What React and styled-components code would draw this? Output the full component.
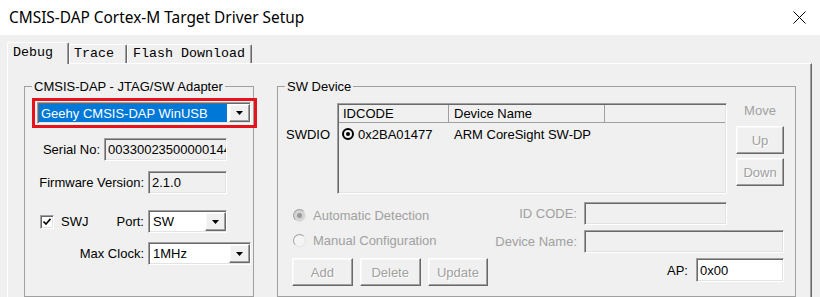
import React from 'react';
import styled, { createGlobalStyle, css } from 'styled-components';

const GlobalStyle = createGlobalStyle`
  * { box-sizing: border-box; }
  body {
    margin: 0;
    background: #f0f0f0;
    font-family: "Liberation Sans", Arial, sans-serif;
    font-size: 13px;
    color: #000;
  }
`;

const sunken = css`
  border: 1px solid;
  border-color: #a0a0a0 #fff #fff #a0a0a0;
  box-shadow: inset 1px 1px 0 #696969, inset -1px -1px 0 #e3e3e3;
`;

const raised = css`
  border: 1px solid;
  border-color: #fff #696969 #696969 #fff;
  box-shadow: inset -1px -1px 0 #a0a0a0, inset 1px 1px 0 #f8f8f8;
`;

const Window = styled.div`
  width: 820px;
  height: 297px;
  overflow: hidden;
  background: #f0f0f0;
`;

const TitleBar = styled.div`
  height: 35px;
  background: #fff;
  display: flex;
  align-items: center;
  justify-content: space-between;
  padding: 0 14px 0 9px;
`;

const Title = styled.div`
  font-family: "Noto Sans", "Open Sans", sans-serif;
  font-size: 15.4px;
  line-height: 20px;
  color: #000;
`;

const Body = styled.div`
  padding: 7px 8px 0 7px;
`;

const TabStrip = styled.div`
  display: flex;
  align-items: flex-end;
  height: 21px;
`;

const Tab = styled.div`
  position: relative;
  z-index: ${p => (p.$active ? 1 : 0)};
  width: ${p => p.$w}px;
  height: ${p => (p.$active ? 22 : 19)}px;
  margin-bottom: ${p => (p.$active ? -1 : 0)}px;
  padding-left: ${p => p.$pad}px;
  background: #f0f0f0;
  border: 1px solid;
  border-bottom: none;
  border-color: #fff #696969 transparent #fff;
  box-shadow: inset -1px 0 0 #a0a0a0;
  border-radius: 2px 2px 0 0;
  font-family: "Liberation Mono", "Courier New", monospace;
  font-size: 13.33px;
  line-height: ${p => (p.$active ? 20 : 17)}px;
  white-space: nowrap;
`;

const TabPanel = styled.div`
  height: 240px;
  border-top: 1px solid #fff;
  border-left: 1px solid #fff;
  border-right: 1px solid #696969;
  box-shadow: inset -1px 0 0 #a0a0a0;
  padding: 15px 0 0 16px;
  display: flex;
  gap: 23px;
`;

const Group = styled.fieldset`
  margin: 0;
  padding: 0;
  min-width: 0;
  width: ${p => p.$w}px;
  height: 218px;
  border: 1px solid #a0a0a0;
`;

const Legend = styled.legend`
  margin-left: 7px;
  padding: 0 2px;
  line-height: 15px;
  font-size: 13px;
`;

const Marked = styled.div`
  margin: 4px 0 0 7px;
  width: 225px;
  height: 30px;
  border: 3px solid #e5141c;
  padding: 1px 0 0 2px;
`;

const Row = styled.div`
  display: flex;
  align-items: center;
  height: 23px;
  margin-top: ${p => p.$mt}px;
`;

const Label = styled.div`
  width: ${p => p.$w}px;
  margin-right: 4px;
  text-align: right;
  white-space: nowrap;
`;

const LeftCell = styled.div`
  width: 119px;
  margin-right: 4px;
  display: flex;
  align-items: center;
`;

const Field = styled.div`
  ${sunken};
  width: ${p => (p.$w ? `${p.$w}px` : '100%')};
  height: ${p => p.$h || 23}px;
  background: ${p => (p.$white ? '#fff' : '#f0f0f0')};
  padding-left: 3px;
  display: flex;
  align-items: center;
  overflow: hidden;
  white-space: nowrap;
`;

const SelectBox = styled.div`
  ${sunken};
  width: ${p => p.$w}px;
  height: ${p => p.$h}px;
  background: #fff;
  padding: 1px 0 1px 1px;
  display: flex;
`;

const SelectValue = styled.div`
  flex: 1;
  min-width: 0;
  margin-right: 2px;
  padding-left: ${p => (p.$hl ? 2 : 3)}px;
  background: ${p => (p.$hl ? '#0078d7' : 'transparent')};
  color: ${p => (p.$hl ? '#fff' : '#000')};
  display: flex;
  align-items: center;
  white-space: nowrap;
  overflow: hidden;
`;

const DropButton = styled.div`
  ${raised};
  flex: 0 0 21px;
  background: #f0f0f0;
  display: flex;
  align-items: center;
  justify-content: center;
`;

const Check = styled.div`
  width: 14px;
  height: 14px;
  margin-left: 15px;
  ${sunken};
  background: #fff;
  display: flex;
  align-items: center;
  justify-content: center;
`;

const CheckText = styled.span`
  margin-left: 7px;
`;

const PortLabel = styled.span`
  margin-left: auto;
`;

const DeviceTop = styled.div`
  display: flex;
  align-items: flex-start;
  margin-top: 9px;
  padding-left: 8px;
  height: 91px;
`;

const SideLabel = styled.div`
  width: 51px;
  margin-top: 24px;
  line-height: 15px;
`;

const ChainTable = styled.div`
  ${sunken};
  width: 390px;
  height: 91px;
  padding: 1px;
  background: #f0f0f0;
`;

const TableRow = styled.div`
  display: grid;
  grid-template-columns: 110px 156px 1fr;
  height: ${p => (p.$head ? 18 : 22)}px;
  border-bottom: ${p => (p.$head ? '1px solid #a0a0a0' : 'none')};
`;

const Cell = styled.div`
  display: flex;
  align-items: center;
  padding-left: ${p => p.$pad ?? 4}px;
  border-right: ${p => (p.$head && !p.$last ? '1px solid #a0a0a0' : 'none')};
  white-space: nowrap;
`;

const RowMark = styled.span`
  width: 12px;
  height: 12px;
  margin-right: 4px;
  border: 2px solid #000;
  border-radius: 50%;
  display: flex;
  align-items: center;
  justify-content: center;
  &::after {
    content: '';
    width: 4px;
    height: 4px;
    border-radius: 50%;
    background: #000;
  }
`;

const MoveCol = styled.div`
  margin-left: 9px;
  width: 48px;
  display: flex;
  flex-direction: column;
`;

const MoveTitle = styled.div`
  line-height: 15px;
  text-align: center;
  color: #a0a0a0;
`;

const Button = styled.div`
  ${raised};
  width: ${p => p.$w}px;
  height: 28px;
  margin-top: ${p => p.$mt || 0}px;
  background: #f0f0f0;
  color: #a0a0a0;
  text-shadow: 1px 1px 0 #fff;
  display: flex;
  align-items: center;
  justify-content: center;
`;

const DetectGrid = styled.div`
  margin-top: 8px;
  padding: 0 11px 0 14px;
  display: grid;
  grid-template-columns: minmax(0, 1fr) auto 200px;
  grid-template-rows: 23px 23px 28px;
  column-gap: 7px;
  row-gap: 5px;
`;

const RadioItem = styled.div`
  display: flex;
  align-items: center;
  gap: 7px;
  padding-left: 1px;
  color: #a0a0a0;
  white-space: nowrap;
  transform: translateY(${p => p.$dy || 0}px);
`;

const Radio = styled.span`
  width: 13px;
  height: 13px;
  border-radius: 50%;
  border: 1px solid;
  border-color: #a0a0a0 #e3e3e3 #e3e3e3 #a0a0a0;
  background: ${p => (p.$on ? '#d4d4d4' : '#f4f4f4')};
  display: flex;
  align-items: center;
  justify-content: center;
  &::after {
    content: '';
    width: 5px;
    height: 5px;
    border-radius: 50%;
    background: ${p => (p.$on ? '#9a9a9a' : 'transparent')};
  }
`;

const DimLabel = styled.div`
  text-align: right;
  align-self: center;
  color: ${p => (p.$dim ? '#a0a0a0' : '#000')};
  white-space: nowrap;
`;

const ButtonBar = styled.div`
  display: flex;
  gap: 7px;
`;

const ApCell = styled.div`
  grid-column: 2 / 4;
  justify-self: end;
  align-self: start;
  display: flex;
  align-items: center;
  gap: 8px;
`;

const Arrow = () => (
  <svg width="7" height="4" viewBox="0 0 7 4">
    <polygon points="0,0 7,0 3.5,4" fill="#000" />
  </svg>
);

const Select = ({ w, h, value, hl }) => (
  <SelectBox $w={w} $h={h}>
    <SelectValue $hl={hl}>{value}</SelectValue>
    <DropButton>
      <Arrow />
    </DropButton>
  </SelectBox>
);

export default function App() {
  return (
    <Window>
      <GlobalStyle />
      <TitleBar>
        <Title>CMSIS-DAP Cortex-M Target Driver Setup</Title>
        <svg width="13" height="13" viewBox="0 0 13 13">
          <path d="M0.5 0.5 L12.5 12.5 M12.5 0.5 L0.5 12.5" stroke="#000" strokeWidth="1" />
        </svg>
      </TitleBar>
      <Body>
        <TabStrip>
          <Tab $active $w={62} $pad={5}>Debug</Tab>
          <Tab $w={58} $pad={4}>Trace</Tab>
          <Tab $w={125} $pad={5}>Flash Download</Tab>
        </TabStrip>
        <TabPanel>
          <Group $w={230}>
            <Legend>CMSIS-DAP - JTAG/SW Adapter</Legend>
            <Marked>
              <Select w={214} h={22} value="Geehy CMSIS-DAP WinUSB" hl />
            </Marked>
            <Row $mt={10}>
              <Label $w={75}>Serial No:</Label>
              <Field $w={123}>00330023500000144</Field>
            </Row>
            <Row $mt={10}>
              <Label $w={119}>Firmware Version:</Label>
              <Field $w={79}>2.1.0</Field>
            </Row>
            <Row $mt={16}>
              <LeftCell>
                <Check>
                  <svg width="8" height="7" viewBox="0 0 8 7">
                    <path d="M0.5 3.5 L3 6 L7.5 0.8" stroke="#000" strokeWidth="1.6" fill="none" />
                  </svg>
                </Check>
                <CheckText>SWJ</CheckText>
                <PortLabel>Port:</PortLabel>
              </LeftCell>
              <Select w={79} h={23} value="SW" />
            </Row>
            <Row $mt={9}>
              <Label $w={119}>Max Clock:</Label>
              <Select w={103} h={23} value="1MHz" />
            </Row>
          </Group>

          <Group $w={519}>
            <Legend>SW Device</Legend>
            <DeviceTop>
              <SideLabel>SWDIO</SideLabel>
              <ChainTable>
                <TableRow $head>
                  <Cell $head>IDCODE</Cell>
                  <Cell $head $pad={5}>Device Name</Cell>
                  <Cell $head $last />
                </TableRow>
                <TableRow>
                  <Cell $pad={3}>
                    <RowMark />
                    0x2BA01477
                  </Cell>
                  <Cell $pad={5}>ARM CoreSight SW-DP</Cell>
                  <Cell />
                </TableRow>
              </ChainTable>
              <MoveCol>
                <MoveTitle>Move</MoveTitle>
                <Button $w={48} $mt={8}>Up</Button>
                <Button $w={48} $mt={4}>Down</Button>
              </MoveCol>
            </DeviceTop>
            <DetectGrid>
              <RadioItem $dy={2}>
                <Radio $on />
                Automatic Detection
              </RadioItem>
              <DimLabel $dim>ID CODE:</DimLabel>
              <Field $w={143} />
              <RadioItem $dy={-1}>
                <Radio />
                Manual Configuration
              </RadioItem>
              <DimLabel $dim>Device Name:</DimLabel>
              <Field />
              <ButtonBar>
                <Button $w={65}>Add</Button>
                <Button $w={65}>Delete</Button>
                <Button $w={65}>Update</Button>
              </ButtonBar>
              <ApCell>
                <DimLabel>AP:</DimLabel>
                <Field $w={88} $h={24} $white>0x00</Field>
              </ApCell>
            </DetectGrid>
          </Group>
        </TabPanel>
      </Body>
    </Window>
  );
}
